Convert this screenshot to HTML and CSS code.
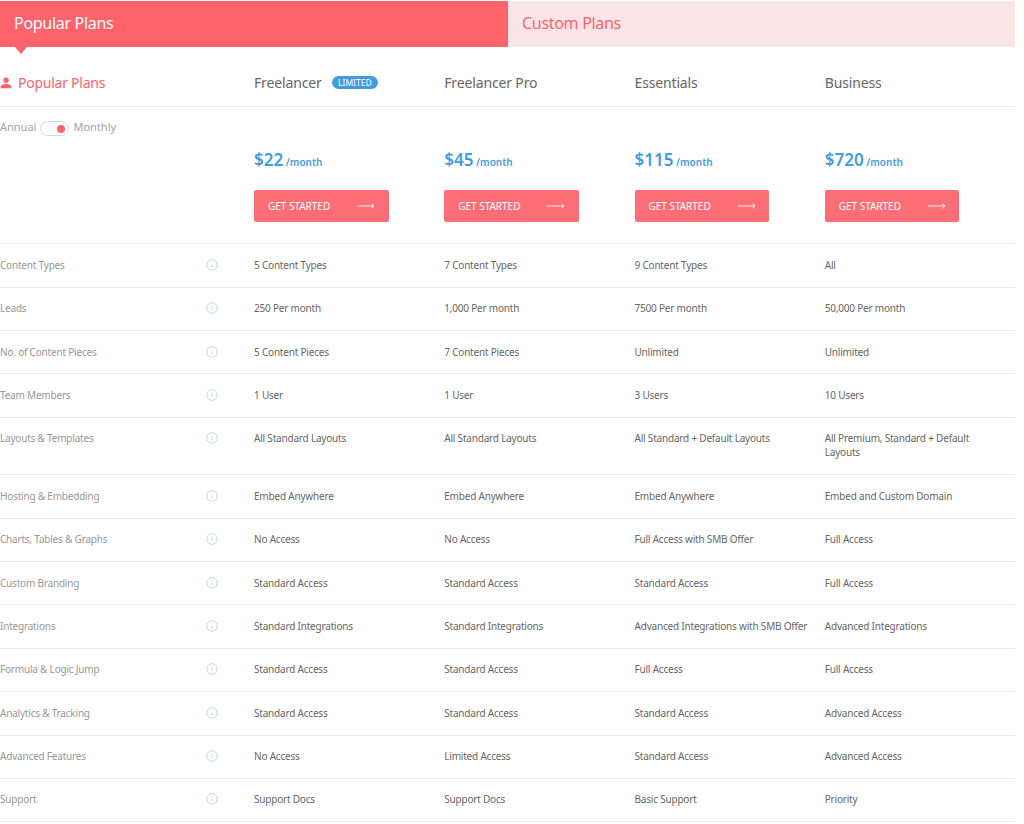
FILE: index.html
```html
<!DOCTYPE html>
<html lang="en">
<head>
<meta charset="utf-8">
<title>Pricing Plans</title>
<link rel="stylesheet" href="styles.css">
</head>
<body>
<svg class="defs" width="0" height="0" aria-hidden="true"><symbol id="info" viewBox="0 0 12 12"><circle cx="6" cy="6" r="5.25" fill="none" stroke="currentColor" stroke-width="1"/><path d="M6 5.2v3.4M6 3.2v1" fill="none" stroke="currentColor" stroke-width="1"/></symbol>
<symbol id="arrow" viewBox="0 0 18 8"><path d="M0 4h17M14.5 1.8 17 4l-2.5 2.2" fill="none" stroke="currentColor" stroke-width="0.9"/></symbol></svg>
<main class="page">
<nav class="tabs">
  <div class="tab tab-active">Popular Plans</div>
  <div class="tab tab-idle">Custom Plans</div>
</nav>
<section class="head row">
  <div class="head-title"><svg class="user" viewBox="0 0 12 12" aria-hidden="true"><circle cx="6" cy="3.2" r="2.7" fill="currentColor"/><path d="M0.6 11.2V9.6C.6 7.9 3.6 7 6 7s5.4.9 5.4 2.6v1.6z" fill="currentColor"/></svg>Popular Plans</div>
  <div class="plan-name">Freelancer <span class="badge">LIMITED</span></div>
  <div class="plan-name">Freelancer Pro</div>
  <div class="plan-name">Essentials</div>
  <div class="plan-name">Business</div>
</section>
<section class="prices row">
  <div class="billing">Annual <span class="switch"><span class="knob"></span></span> Monthly</div>
  <div class="plan"><div class="price"><b>$22</b> <span>/month</span></div><a class="cta">GET STARTED<svg class="arrow"><use href="#arrow"/></svg></a></div>
  <div class="plan"><div class="price"><b>$45</b> <span>/month</span></div><a class="cta">GET STARTED<svg class="arrow"><use href="#arrow"/></svg></a></div>
  <div class="plan"><div class="price"><b>$115</b> <span>/month</span></div><a class="cta">GET STARTED<svg class="arrow"><use href="#arrow"/></svg></a></div>
  <div class="plan"><div class="price"><b>$720</b> <span>/month</span></div><a class="cta">GET STARTED<svg class="arrow"><use href="#arrow"/></svg></a></div>
</section>
<section class="row feat"><div class="label">Content Types<svg class="info"><use href="#info"/></svg></div><div>5 Content Types</div><div>7 Content Types</div><div>9 Content Types</div><div>All</div></section>
<section class="row feat"><div class="label">Leads<svg class="info"><use href="#info"/></svg></div><div>250 Per month</div><div>1,000 Per month</div><div>7500 Per month</div><div>50,000 Per month</div></section>
<section class="row feat"><div class="label">No. of Content Pieces<svg class="info"><use href="#info"/></svg></div><div>5 Content Pieces</div><div>7 Content Pieces</div><div>Unlimited</div><div>Unlimited</div></section>
<section class="row feat"><div class="label">Team Members<svg class="info"><use href="#info"/></svg></div><div>1 User</div><div>1 User</div><div>3 Users</div><div>10 Users</div></section>
<section class="row feat"><div class="label">Layouts &amp; Templates<svg class="info"><use href="#info"/></svg></div><div>All Standard Layouts</div><div>All Standard Layouts</div><div>All Standard + Default Layouts</div><div>All Premium, Standard + Default Layouts</div></section>
<section class="row feat"><div class="label">Hosting &amp; Embedding<svg class="info"><use href="#info"/></svg></div><div>Embed Anywhere</div><div>Embed Anywhere</div><div>Embed Anywhere</div><div>Embed and Custom Domain</div></section>
<section class="row feat"><div class="label">Charts, Tables &amp; Graphs<svg class="info"><use href="#info"/></svg></div><div>No Access</div><div>No Access</div><div>Full Access with SMB Offer</div><div>Full Access</div></section>
<section class="row feat"><div class="label">Custom Branding<svg class="info"><use href="#info"/></svg></div><div>Standard Access</div><div>Standard Access</div><div>Standard Access</div><div>Full Access</div></section>
<section class="row feat"><div class="label">Integrations<svg class="info"><use href="#info"/></svg></div><div>Standard Integrations</div><div>Standard Integrations</div><div>Advanced Integrations with SMB Offer</div><div>Advanced Integrations</div></section>
<section class="row feat"><div class="label">Formula &amp; Logic Jump<svg class="info"><use href="#info"/></svg></div><div>Standard Access</div><div>Standard Access</div><div>Full Access</div><div>Full Access</div></section>
<section class="row feat"><div class="label">Analytics &amp; Tracking<svg class="info"><use href="#info"/></svg></div><div>Standard Access</div><div>Standard Access</div><div>Standard Access</div><div>Advanced Access</div></section>
<section class="row feat"><div class="label">Advanced Features<svg class="info"><use href="#info"/></svg></div><div>No Access</div><div>Limited Access</div><div>Standard Access</div><div>Advanced Access</div></section>
<section class="row feat"><div class="label">Support<svg class="info"><use href="#info"/></svg></div><div>Support Docs</div><div>Support Docs</div><div>Basic Support</div><div>Priority</div></section>
</main>
</body>
</html>
```
FILE: styles.css
```css
* { box-sizing: border-box; }
html, body { margin: 0; background: #fff; }
body { font-family: "Noto Sans", "Open Sans", sans-serif; color: #666; overflow: hidden; height: 824px; }
.defs { position: absolute; }
.page { width: 1015px; padding-top: 1px; }
.tabs { display: grid; grid-template-columns: 508px 507px; height: 46px; }
.tab { display: flex; align-items: center; font-size: 16px; letter-spacing: -0.3px; padding-bottom: 2px; }
.tab-active { background: #ff636b; color: #fff; padding-left: 14px; position: relative; }
.tab-active::after { content: ""; position: absolute; left: 15px; top: 46px; border: 6px solid transparent; border-top: 7px solid #ff636b; border-bottom: 0; }
.tab-idle { background: #fde5e7; color: #ff636b; padding-left: 14px; }
.row { display: grid; grid-template-columns: 254px repeat(4, 1fr); border-bottom: 1px solid #e6e8ea; }
.head { height: 60px; align-items: center; padding-top: 12px; }
.head-title { display: flex; align-items: center; color: #ff636b; font-size: 14px; gap: 6px; letter-spacing: -0.25px; }
.user { width: 12px; height: 12px; flex: none; }
.plan-name { font-size: 14px; letter-spacing: -0.15px; color: #666; display: flex; align-items: center; gap: 10px; }
.badge { background: #3f9ddf; color: #fff; font-size: 8.5px; height: 13px; line-height: 13px; border-radius: 7px; padding: 0 6.5px; letter-spacing: 0; }
.prices { height: 137.3px; }
.billing { display: flex; align-items: flex-start; gap: 4px; font-size: 11px; color: #a3a3a3; padding-top: 12px; line-height: 15px; }
.switch { display: block; width: 29px; height: 15px; margin-top: 2px; border: 1px solid #ccdae8; border-radius: 8px; position: relative; }
.knob { position: absolute; right: 3px; top: 2.5px; width: 8px; height: 8px; background: #ff636b; border-radius: 50%; }
.plan { padding-top: 40px; }
.price { color: #3f9ddf; font-size: 10px; font-weight: 600; height: 26px; line-height: 26px; white-space: nowrap; }
.price b { font-size: 17px; font-weight: 600; }
.cta { margin-top: 17px; display: flex; justify-content: space-between; align-items: center; width: 134.5px; height: 32px; background: #ff6e76; border-radius: 2px; color: #fff; font-size: 10px; letter-spacing: -0.02px; padding: 0 13.5px 0 14px; }
.arrow { width: 18px; height: 8px; }
.feat { font-size: 10px; letter-spacing: -0.2px; line-height: 14px; color: #666; padding: 13.505px 0 14.905px; }
.feat > div { padding-right: 10px; }
.label { color: #979797; position: relative; }
.info { position: absolute; left: 206px; top: 1px; width: 12px; height: 12px; color: #c3d8ec; }
```
